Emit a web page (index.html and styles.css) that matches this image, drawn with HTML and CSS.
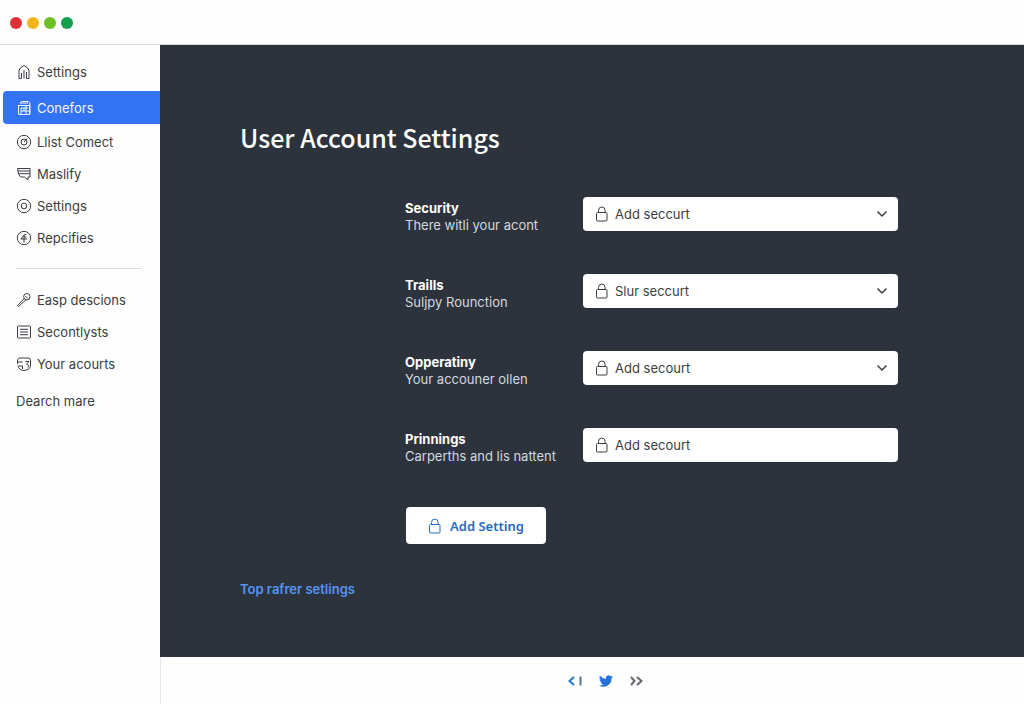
FILE: index.html
```html
<!DOCTYPE html>
<html lang="en">
<head>
<meta charset="utf-8">
<meta name="viewport" content="width=device-width, initial-scale=1">
<title>User Account Settings</title>
<link rel="stylesheet" href="styles.css">
</head>
<body>
<svg class="sprite" aria-hidden="true">
  <symbol id="lock" viewBox="0 0 14 16"><rect x="1.5" y="6.5" width="10.500" height="8.500" rx="1"/><path d="M3.500 6.500V4.500a3.300 3.500 0 0 1 6.600 0v2"/></symbol>
  <symbol id="chevron" viewBox="0 0 12 8"><path d="M1.500 1.500 6 6l4.500-4.500"/></symbol>
</svg>
<div class="app">
  <header class="titlebar">
    <span class="dot dot-red"></span>
    <span class="dot dot-yellow"></span>
    <span class="dot dot-lime"></span>
    <span class="dot dot-green"></span>
  </header>
  <nav class="sidebar">
    <a class="item" href="#"><svg class="icon" viewBox="0 0 16 16"><path d="M5.500 14.500H3V6.500Q3.500 3.500 8 1.500q4.500 2 5 5v8h-2.500V8M8 14.500V6M5.500 14.500V9"/></svg>Settings</a>
    <a class="item item-active" href="#"><svg class="icon" viewBox="0 0 16 16"><path d="M2.500 5v9.500h11V5M2 5.500h12M4 3l2-1.500h6.500L14 3v11.500M4 3h8M5 8h3v3H5zM10 6v8M8 8h4M8 11h5M5 11v3"/></svg>Conefors</a>
    <a class="item" href="#"><svg class="icon" viewBox="0 0 16 16"><circle cx="8" cy="8" r="6.700"/><circle cx="8" cy="8" r="3"/><path d="m8 8 3-3.500"/></svg>Llist Comect</a>
    <a class="item" href="#"><svg class="icon" viewBox="0 0 16 16"><path d="M1.500 2.500h12.500v8.500h-2v3l-3.500-3h-4L2.500 8zM2 5h12M3 7.700h11"/></svg>Maslify</a>
    <a class="item" href="#"><svg class="icon" viewBox="0 0 16 16"><circle cx="8" cy="8" r="6.700"/><circle cx="8" cy="8" r="2.800"/></svg>Settings</a>
    <a class="item" href="#"><svg class="icon" viewBox="0 0 16 16"><circle cx="8" cy="8" r="6.700"/><path d="M10.500 4.500 8 5v7.500M8 5 4.800 9h6.400M8 7h2.500"/></svg>Repcifies</a>
    <hr class="divider">
    <a class="item" href="#"><svg class="icon" viewBox="0 0 16 16"><circle cx="10.800" cy="4.700" r="3.200"/><path d="M8.300 6.500 1.500 13.500l1 1L9.800 8M9.300 4l2.500 2.500"/></svg>Easp descions</a>
    <a class="item" href="#"><svg class="icon" viewBox="0 0 16 16"><rect x="1.500" y="2" width="13" height="12" rx="1"/><path d="M4 5.300h8M4 8h8M4 10.700h8"/></svg>Secontlysts</a>
    <a class="item" href="#"><svg class="icon" viewBox="0 0 16 16"><path d="M1.500 3.500Q3 1.500 5 2h7q2.500 0 2.500 2v5q0 5-6.500 5.500Q2.500 14 2 9.500M2 6h4.500M3 10h3.500v3M9.500 5.500h3.500L10.500 8q3 .5 1.500 3.500M1.500 3.500V8"/></svg>Your acourts</a>
    <a class="item item-last" href="#">Dearch mare</a>
  </nav>
  <main class="content">
    <h1 class="title">User Account Settings</h1>
    <form class="form">
      <div class="row">
        <label class="label" for="security"><strong class="name">Security</strong><span class="hint">There witli your acont</span></label>
        <div class="field"><svg class="lock"><use href="#lock"/></svg><select class="control" id="security"><option>Add seccurt</option></select><svg class="chevron"><use href="#chevron"/></svg></div>
      </div>
      <div class="row">
        <label class="label" for="trails"><strong class="name">Traills</strong><span class="hint">Suljpy Rounction</span></label>
        <div class="field"><svg class="lock"><use href="#lock"/></svg><select class="control" id="trails"><option>Slur seccurt</option></select><svg class="chevron"><use href="#chevron"/></svg></div>
      </div>
      <div class="row">
        <label class="label" for="operating"><strong class="name">Opperatiny</strong><span class="hint">Your accouner ollen</span></label>
        <div class="field"><svg class="lock"><use href="#lock"/></svg><select class="control" id="operating"><option>Add secourt</option></select><svg class="chevron"><use href="#chevron"/></svg></div>
      </div>
      <div class="row">
        <label class="label" for="prinnings"><strong class="name">Prinnings</strong><span class="hint">Carperths and lis nattent</span></label>
        <div class="field"><svg class="lock"><use href="#lock"/></svg><input class="control" id="prinnings" type="text" value="Add secourt"></div>
      </div>
      <button class="add" type="button"><svg class="lock lock-blue"><use href="#lock"/></svg>Add Setting</button>
    </form>
    <a class="more" href="#">Top rafrer setlings</a>
  </main>
  <footer class="footer">
    <a class="foot-link" href="#" aria-label="Previous"><svg width="16" height="12" viewBox="0 0 16 12"><path class="foot-blue" d="M7 2 2.500 6 7 10"/><path class="foot-slate" d="M13.500 1.500v9"/></svg></a>
    <a class="foot-link" href="#" aria-label="Twitter"><svg width="14" height="14" viewBox="0 0 24 24"><path class="bird" d="M24 4.600a10 10 0 0 1-2.800.8 5 5 0 0 0 2.100-2.700 10 10 0 0 1-3.100 1.200A4.900 4.900 0 0 0 11.800 8.400 14 14 0 0 1 1.700 3.200a4.900 4.900 0 0 0 1.500 6.600 5 5 0 0 1-2.200-.6 4.900 4.900 0 0 0 3.900 4.900 5 5 0 0 1-2.200.1 4.900 4.900 0 0 0 4.600 3.400A10 10 0 0 1 0 19.600 14 14 0 0 0 21.500 7.100 10 10 0 0 0 24 4.600z"/></svg></a>
    <a class="foot-link" href="#" aria-label="Next"><svg width="14" height="12" viewBox="0 0 14 12"><path class="foot-gray" d="M2 2l3.500 4L2 10M8 2l4.500 4L8 10"/></svg></a>
  </footer>
</div>
</body>
</html>
```
FILE: styles.css
```css
* { box-sizing: border-box; }

body {
  margin: 0;
  font-family: Inter, "Liberation Sans", sans-serif;
  font-size: 13px;
  color: #3a3d42;
  background: #fefefe;
}

svg { fill: none; stroke: currentColor; flex: none; }
.sprite { display: none; }

.app {
  display: grid;
  grid-template-columns: 160px 1fr;
  grid-template-rows: 45px 1fr 47px;
  min-height: 100vh;
}

.titlebar {
  grid-column: 1 / -1;
  display: flex;
  align-items: center;
  gap: 5px;
  padding: 2px 10px 0;
  border-bottom: 1px solid #dcdde0;
}
.dot { width: 12px; height: 12px; border-radius: 50%; }
.dot-red { background: #de3135; }
.dot-yellow { background: #f2b51d; }
.dot-lime { background: #6cc024; }
.dot-green { background: #13a04b; }

.sidebar {
  grid-row: 2 / 4;
  display: flex;
  flex-direction: column;
  padding-top: 11px;
  border-right: 1px solid #e4e5e8;
  margin-right: -1px;
}
.item {
  display: flex;
  align-items: center;
  gap: 5px;
  height: 32px;
  padding-left: 16px;
  color: inherit;
  text-decoration: none;
}
.item-active {
  height: 33px;
  margin: 3px 0 2px 3px;
  padding-left: 13px;
  color: #f4f7ff;
  background: #3273f3;
  border-radius: 4px 0 0 4px;
}
.item-last { margin-top: 5px; }
.icon { width: 16px; height: 16px; }
.divider {
  width: 126px;
  margin: 14px 16px 15px;
  border: 0;
  border-top: 1px solid #dddee1;
}

.content {
  padding: 70px 126px 54px 80px;
  color: #fff;
  background: #2d333d;
}
.title {
  margin: 0 0 38px;
  font: 500 25px/44px "Noto Sans CJK SC", "Noto Sans", sans-serif;
}
.form { margin-left: 165px; }
.row {
  display: grid;
  grid-template-columns: 178px 1fr;
  align-items: start;
}
.row + .row { margin-top: 40px; }
.label {
  display: flex;
  flex-direction: column;
  padding-top: 3px;
  line-height: 17px;
}
.name { font-weight: 700; }
.hint { color: #d5d8dd; }
.field {
  display: flex;
  align-items: center;
  height: 34px;
  padding: 0 10px 0 12px;
  color: #3a3d42;
  background: #fff;
  border-radius: 4px;
}
.lock { width: 14px; height: 16px; }
.lock-blue { color: #2468bf; }
.chevron { width: 12px; height: 8px; stroke-width: 1.5; }
.control {
  flex: 1;
  min-width: 0;
  height: 34px;
  margin-left: 6px;
  padding: 0;
  border: 0;
  outline: 0;
  appearance: none;
  font: inherit;
  color: inherit;
  background: transparent;
}
.add {
  display: flex;
  align-items: center;
  justify-content: center;
  gap: 8px;
  width: 140px;
  height: 37px;
  margin: 42px 0 0 1px;
  padding: 0;
  border: 0;
  border-radius: 4px;
  font: 600 13px "Noto Sans", sans-serif;
  color: #2468bf;
  background: #fff;
}
.more {
  display: inline-block;
  margin-top: 35px;
  line-height: 20px;
  font-weight: 600;
  color: #5595f2;
  text-decoration: none;
}

.footer {
  display: flex;
  align-items: center;
  justify-content: center;
  gap: 16px;
  padding-left: 26px;
}
.foot-link { display: flex; }
.foot-blue { stroke: #2478c4; stroke-width: 2; }
.foot-slate { stroke: #50779c; stroke-width: 2; }
.foot-gray { stroke: #62666d; stroke-width: 2; }
.bird { fill: #2672d8; stroke: none; }
```
